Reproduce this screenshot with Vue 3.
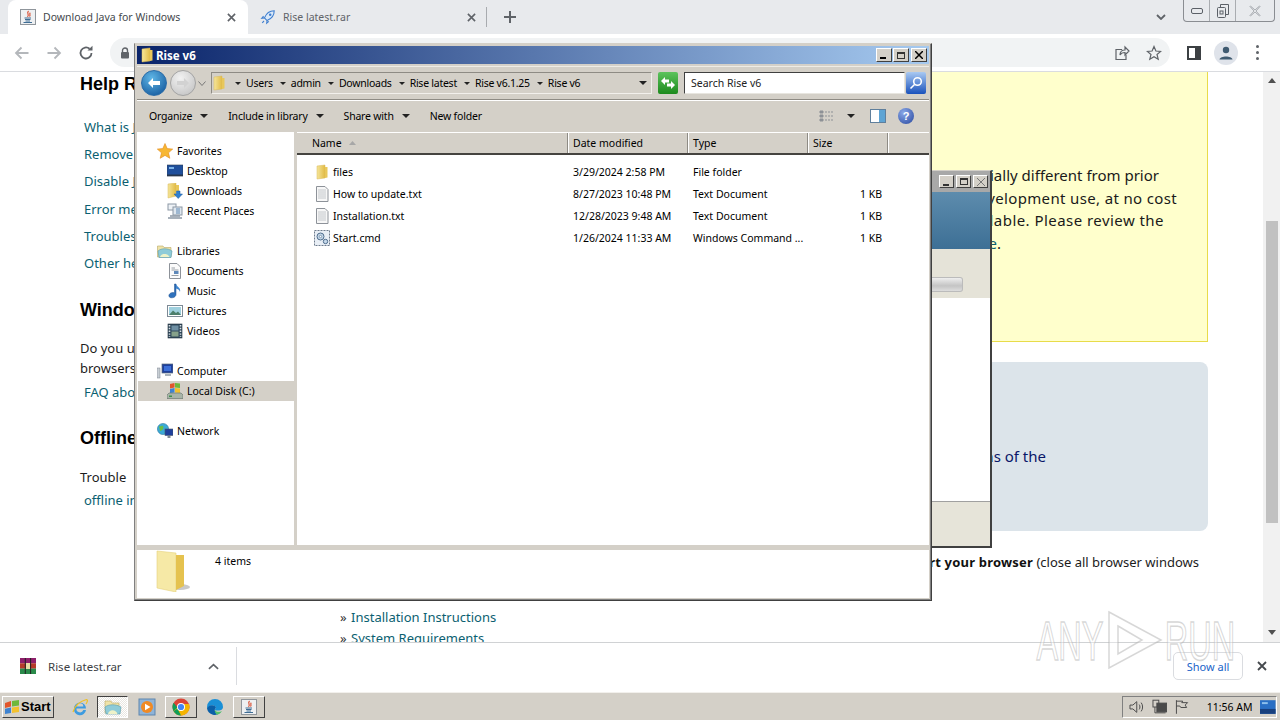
<script setup>
const crumbs = ['Users', 'admin', 'Downloads', 'Rise latest', 'Rise v6.1.25', 'Rise v6']
const navRows = [
  { label: 'Favorites', icon: 'i-star', level: 0 },
  { label: 'Desktop', icon: 'i-desktop', level: 1 },
  { label: 'Downloads', icon: 'i-downloads', level: 1 },
  { label: 'Recent Places', icon: 'i-recent', level: 1 },
  { gap: true },
  { label: 'Libraries', icon: 'i-libraries', level: 0 },
  { label: 'Documents', icon: 'i-doc', level: 1 },
  { label: 'Music', icon: 'i-music', level: 1 },
  { label: 'Pictures', icon: 'i-pictures', level: 1 },
  { label: 'Videos', icon: 'i-videos', level: 1 },
  { gap: true },
  { label: 'Computer', icon: 'i-computer', level: 0 },
  { label: 'Local Disk (C:)', icon: 'i-disk', level: 1, selected: true },
  { gap: true },
  { label: 'Network', icon: 'i-network', level: 0 }
]
const files = [
  { name: 'files', icon: 'i-folder', date: '3/29/2024 2:58 PM', type: 'File folder', size: '' },
  { name: 'How to update.txt', icon: 'i-txt', date: '8/27/2023 10:48 PM', type: 'Text Document', size: '1 KB' },
  { name: 'Installation.txt', icon: 'i-txt', date: '12/28/2023 9:48 AM', type: 'Text Document', size: '1 KB' },
  { name: 'Start.cmd', icon: 'i-cmd', date: '1/26/2024 11:33 AM', type: 'Windows Command ...', size: '1 KB' }
]
const yellowLines = [
  { text: 'ially different from prior', inset: 48, spacing: 0 },
  { text: 'development use, at no cost', inset: 30, spacing: 0.35 },
  { text: 'available. Please review the', inset: 43, spacing: 0.45 }
]
</script>

<template>
  <div class="screen">
    <svg class="defs" width="0" height="0">
      <defs>
        <linearGradient id="gFolder" x1="0" y1="0" x2="1" y2="0">
          <stop offset="0" stop-color="#f5e59a" />
          <stop offset="1" stop-color="#e2bb45" />
        </linearGradient>
        <symbol id="i-folder" viewBox="0 0 16 16">
          <path d="M3 2 L11 1 L11 14 L3 15 Z" fill="url(#gFolder)" stroke="#d9b95a" stroke-width=".5" />
          <path d="M11 3 H13.5 V13.5 L11 14 Z" fill="#e8c75a" />
        </symbol>
        <symbol id="i-txt" viewBox="0 0 16 16">
          <path d="M2.5 .5 H11 L14 3.5 V15.5 H2.5 Z" fill="#f7f7f7" stroke="#8d9299" />
          <path d="M4 4 H12 M4 6 H12 M4 8 H12 M4 10 H12 M4 12 H12" stroke="#c4c8cc" />
        </symbol>
        <symbol id="i-cmd" viewBox="0 0 16 16">
          <rect x=".5" y=".5" width="15" height="15" fill="#e8eef5" stroke="#6d7b8c" stroke-dasharray="2 1" />
          <circle cx="6.5" cy="6.5" r="3.5" fill="#c5d8ea" stroke="#4f6d8c" />
          <circle cx="6.5" cy="6.5" r="1.2" fill="#fff" stroke="#4f6d8c" stroke-width=".6" />
          <circle cx="11.5" cy="11.5" r="2.2" fill="#c5d8ea" stroke="#4f6d8c" />
        </symbol>
        <symbol id="i-star" viewBox="0 0 16 16">
          <path d="M8 .5 L10.2 5.6 L15.7 6.1 L11.5 9.8 L12.8 15.3 L8 12.4 L3.2 15.3 L4.5 9.8 L.3 6.1 L5.8 5.6 Z" fill="#f7b733" stroke="#e28a1e" stroke-width=".6" />
        </symbol>
        <symbol id="i-desktop" viewBox="0 0 16 16">
          <rect x="0" y="2" width="16" height="11" fill="#1f4f9c" stroke="#2c3e55" stroke-width=".6" />
          <rect x="2" y="4" width="5" height="2" fill="#7db4e8" />
          <rect x="0" y="11.5" width="16" height="1.6" fill="#27374c" />
        </symbol>
        <symbol id="i-downloads" viewBox="0 0 16 16">
          <path d="M1 1 L9 0 L9 13 L1 15 Z" fill="url(#gFolder)" stroke="#d9b95a" stroke-width=".5" />
          <path d="M9 2 H12 V8 H9 Z" fill="#e8c75a" />
          <path d="M9.5 8 H13 V11 H15.5 L11.2 15.5 L7 11 H9.5 Z" fill="#2f7fd0" stroke="#1c5a9e" stroke-width=".5" />
        </symbol>
        <symbol id="i-recent" viewBox="0 0 16 16">
          <rect x="1" y="1" width="8" height="6" fill="#eef2f6" stroke="#8c98a5" />
          <rect x="6" y="4" width="9" height="8" fill="#dfe7ef" stroke="#8c98a5" />
          <path d="M1 15 H15 M3 13 H13" stroke="#8c98a5" stroke-width="1.4" />
          <path d="M9 6 H13 M9 8 H13 M9 10 H13" stroke="#5c87b2" />
        </symbol>
        <symbol id="i-libraries" viewBox="0 0 16 16">
          <path d="M.5 3 H6 L7 4.5 H14 V14 H.5 Z" fill="#efe3a8" stroke="#b9a765" stroke-width=".6" />
          <path d="M1 8 C4 5 11 5 15 8 L14 14.5 H2 Z" fill="#8ecbd8" stroke="#5b9aa9" stroke-width=".6" />
          <path d="M3 14 C4 10 11 10 12.5 14 Z" fill="#eef2c8" />
        </symbol>
        <symbol id="i-doc" viewBox="0 0 16 16">
          <path d="M2.5 .5 H10 L13.5 4 V15.5 H2.5 Z" fill="#fbfbfb" stroke="#8d9299" />
          <path d="M4.5 5 H8 M4.5 7 H11.5 M4.5 12.5 H11.5" stroke="#9aa0a6" />
          <rect x="7" y="8" width="4.5" height="3" fill="#5e88b8" />
        </symbol>
        <symbol id="i-music" viewBox="0 0 16 16">
          <path d="M9 1 V11.5 C9 14 5.5 15.5 3 14.5 C0.5 13 2.5 9.5 6 9.5 L7.5 9.8 V1 Z" fill="#2f72bd" stroke="#1c4f8c" stroke-width=".5" />
          <path d="M9 1 C10 4 14 4.5 13 9 C12.5 6.5 10.5 6 9 5.5 Z" fill="#3f86cf" />
        </symbol>
        <symbol id="i-pictures" viewBox="0 0 16 16">
          <rect x=".5" y="2.5" width="15" height="11" fill="#fff" stroke="#7d8a95" />
          <rect x="2" y="4" width="12" height="8" fill="#9fd0de" />
          <path d="M2 12 L6 7.5 L9 10 L11 8.5 L14 12 Z" fill="#4d7f6c" />
        </symbol>
        <symbol id="i-videos" viewBox="0 0 16 16">
          <rect x="1" y="1" width="14" height="14" fill="#30495c" stroke="#22313d" stroke-width=".6" />
          <path d="M2.5 2 V14 M13.5 2 V14" stroke="#d6dde2" stroke-width="1.6" stroke-dasharray="1.4 1.4" />
          <rect x="4.5" y="2.5" width="7" height="5" fill="#6e8fa3" />
          <rect x="4.5" y="8.5" width="7" height="5" fill="#86a18a" />
        </symbol>
        <symbol id="i-computer" viewBox="0 0 16 16">
          <rect x="5" y="1" width="11" height="9" fill="#1e3f9c" stroke="#5b6a7c" stroke-width=".7" />
          <rect x="7" y="3" width="7" height="5" fill="#3c6fd8" />
          <rect x="8" y="11" width="6" height="2" fill="#aab3bb" />
          <rect x="0" y="5" width="3" height="10" fill="#c8ced4" stroke="#77818b" stroke-width=".5" />
        </symbol>
        <symbol id="i-disk" viewBox="0 0 16 16">
          <path d="M3 1 L7.5 0 V4.5 L3 5.5 Z" fill="#e2562b" />
          <path d="M8 0 L13 .5 V5 L8 4.5 Z" fill="#6fb83a" />
          <path d="M3 6 L7.5 5 V9.5 L3 10 Z" fill="#3f83d0" />
          <path d="M8 5 L13 5.5 V10 L8 9.5 Z" fill="#f3c12d" />
          <path d="M0 12 L2 10 H14 L16 12 V15.5 H0 Z" fill="#a8b4a8" stroke="#5d6b64" stroke-width=".6" />
          <rect x="2" y="12.5" width="3" height="1.5" fill="#3e8f4d" />
        </symbol>
        <symbol id="i-network" viewBox="0 0 16 16">
          <circle cx="6" cy="6" r="5.6" fill="#3ba9d6" stroke="#1f6c95" stroke-width=".5" />
          <path d="M2 3 C4 4 5 2 6 3 S6 8 3 8 Z" fill="#6bbe45" />
          <rect x="8" y="6" width="8" height="6.5" fill="#1e3f9c" stroke="#46566a" stroke-width=".6" />
          <rect x="10.5" y="13" width="3" height="2" fill="#808b95" />
        </symbol>
        <symbol id="i-java" viewBox="0 0 16 16">
          <rect x=".5" y=".5" width="15" height="15" fill="#eef0f2" stroke="#8f959b" />
          <path d="M8.5 2 C6 4.5 10 5.5 7.5 7.8 M10.3 3.8 C8.8 5 11 6 9.5 7.5" stroke="#d8482b" stroke-width="1.1" fill="none" />
          <path d="M4.5 9 H11 M5 10.5 H10.5 M5.5 12 H10 M3.5 13.5 H12" stroke="#3f6d94" stroke-width="1" />
        </symbol>
      </defs>
    </svg>

    <!-- Chrome tab strip -->
    <header class="tabstrip">
      <div class="tab active">
        <svg class="ico16"><use href="#i-java" /></svg>
        <span class="tab-title">Download Java for Windows</span>
        <svg class="tab-x" viewBox="0 0 10 10"><path d="M1 1 L9 9 M9 1 L1 9" /></svg>
      </div>
      <div class="tab">
        <svg class="ico16" viewBox="0 0 18 18">
          <path d="M16 2 C11 2 7 5 5 10 L8 13 C13 11 16 7 16 2 Z" fill="#dbe9f8" stroke="#3f7fd0" stroke-width="1.2" />
          <path d="M5 10 L2 10.5 L4 8 M8 13 L7.5 16 L10 14 M4.5 13.5 L2.5 15.5" fill="none" stroke="#3f7fd0" stroke-width="1.2" />
          <circle cx="11.5" cy="6.5" r="1.4" fill="#3f7fd0" />
        </svg>
        <span class="tab-title">Rise latest.rar</span>
        <svg class="tab-x" viewBox="0 0 10 10"><path d="M1 1 L9 9 M9 1 L1 9" /></svg>
      </div>
      <span class="tab-sep"></span>
      <svg class="tab-plus" viewBox="0 0 12 12"><path d="M6 0 V12 M0 6 H12" /></svg>
      <span class="spacer"></span>
      <svg class="tab-chevron" viewBox="0 0 10 6"><path d="M1 1 L5 5 L9 1" /></svg>
      <div class="win-ctrls">
        <span class="wc wc-min"><svg viewBox="0 0 12 6" width="12" height="6"><rect x=".5" y=".5" width="11" height="5" rx="1.5" /></svg></span>
        <span class="wc wc-res"><svg viewBox="0 0 12 14" width="12" height="14"><rect x=".5" y="3.5" width="8" height="10" rx="1" /><path d="M3.5 3 V.5 H11.5 V10.5 H9" /><rect x="3" y="7" width="3" height="3" /></svg></span>
        <span class="wc wc-close"><svg viewBox="0 0 12 12" width="12" height="12"><path d="M1.5 1 L6 5 L10.5 1 L11 1.5 L7 6 L11 10.5 L10.5 11 L6 7 L1.5 11 L1 10.5 L5 6 L1 1.5 Z" /></svg></span>
      </div>
    </header>

    <!-- Chrome toolbar -->
    <nav class="toolbar">
      <svg class="tb-ic dim" viewBox="0 0 16 16"><path d="M14.5 8 H2 M7.5 2.5 L2 8 L7.5 13.5" /></svg>
      <svg class="tb-ic dim" viewBox="0 0 16 16"><path d="M1.5 8 H14 M8.5 2.5 L14 8 L8.5 13.5" /></svg>
      <svg class="tb-ic" viewBox="0 0 16 16"><path d="M13.5 8 A5.5 5.5 0 1 1 11.6 3.8" /><path class="solid" d="M9.5 5.5 H14.5 V.8 Z" /></svg>
      <div class="omnibox">
        <svg class="lock" viewBox="0 0 10 12"><path d="M2.5 5 V3.5 A2.5 2.5 0 0 1 7.5 3.5 V5" /><rect class="solid" x="1" y="5" width="8" height="6.5" rx="1" /></svg>
        <span class="spacer"></span>
        <svg class="omni-ic" viewBox="0 0 16 16"><path d="M8 4.5 H2 V14.5 H12 V10" /><path d="M6 10 C6 6.5 8.5 5 11 5 V2 L15 6 L11 10 V7.5 C9 7.5 7 8 6 10 Z" /></svg>
        <svg class="omni-ic" viewBox="0 0 16 16"><path d="M8 1.5 L9.9 6 L14.7 6.4 L11 9.5 L12.2 14.2 L8 11.7 L3.8 14.2 L5 9.5 L1.3 6.4 L6.1 6 Z" /></svg>
      </div>
      <svg class="panel-ic" viewBox="0 0 14 14"><rect x="1" y="1" width="12" height="12" /><rect class="solid" x="8" y="1" width="5" height="12" /></svg>
      <span class="avatar"><svg viewBox="0 0 16 16" width="16" height="16"><circle cx="8" cy="5" r="3.2" /><path d="M1.5 14.5 C2 10.5 14 10.5 14.5 14.5 Z" /></svg></span>
      <span class="dots"><i></i><i></i><i></i></span>
    </nav>

    <!-- Web page -->
    <main class="page">
      <aside class="page-left">
        <h2 class="h-first">Help Resources</h2>
        <ul class="links">
          <li>What is Java?</li>
          <li>Remove older versions</li>
          <li>Disable Java</li>
          <li>Error messages</li>
          <li>Troubleshoot Java</li>
          <li>Other help</li>
        </ul>
        <h2 class="h-win">Windows</h2>
        <p class="para">Do you use<br />browsers</p>
        <p class="link-line link-faq">FAQ about</p>
        <h2 class="h-off">Offline</h2>
        <p class="para para-off">Trouble</p>
        <p class="link-line link-off">offline installer</p>
      </aside>
      <section class="page-main">
        <div class="notice">
          <div
            v-for="l in yellowLines"
            :key="l.text"
            class="notice-line"
            :style="{ paddingRight: l.inset + 'px', letterSpacing: l.spacing + 'px' }"
          >{{ l.text }}</div>
          <div class="notice-line last">here<span class="dot">.</span></div>
        </div>
        <div class="bluebox"><span class="blue-text">versions of the</span></div>
        <p class="restart"><b>Restart your browser</b> (close all browser windows</p>
        <p class="more"><span class="raquo">»</span> <span class="teal">Installation Instructions</span></p>
        <p class="more"><span class="raquo">»</span> <span class="teal">System Requirements</span></p>
      </section>
      <div class="scrollbar">
        <span class="sb-arrow up"></span>
        <span class="sb-thumb"></span>
        <span class="sb-arrow down"></span>
      </div>
    </main>

    <!-- Download shelf -->
    <footer class="shelf">
      <svg class="rar" viewBox="0 0 16 16">
        <rect x="0" y="0" width="16" height="5.4" fill="#8e1f6b" />
        <rect x="0" y="5.3" width="16" height="5.4" fill="#b63a2a" />
        <rect x="0" y="10.6" width="16" height="5.4" fill="#2a8a4a" />
        <path d="M5.3 0 V16 M10.6 0 V16" stroke="#222" stroke-width="1" />
        <rect x="6" y="5" width="4" height="6" fill="#e9dca5" />
      </svg>
      <span class="shelf-name">Rise latest.rar</span>
      <svg class="shelf-chev" viewBox="0 0 12 7"><path d="M1 6 L6 1.5 L11 6" /></svg>
      <span class="shelf-sep"></span>
      <span class="spacer"></span>
      <span class="show-all">Show all</span>
      <svg class="shelf-x" viewBox="0 0 10 10"><path d="M1 1 L9 9 M9 1 L1 9" /></svg>
    </footer>

    <!-- Windows taskbar -->
    <footer class="taskbar">
      <button class="start">
        <svg viewBox="0 0 16 16" width="16" height="16">
          <path d="M1 4 L7 2 V7.5 L1 9 Z" fill="#e2562b" />
          <path d="M8 2 L15 1 V6.5 L8 7.5 Z" fill="#6fb83a" />
          <path d="M1 9.8 L7 8.5 V14 L1 15 Z" fill="#3f83d0" />
          <path d="M8 8.5 L15 7.5 V13 L8 14 Z" fill="#f3c12d" />
        </svg>
        <span>Start</span>
      </button>
      <span class="tk-slot ie">
        <svg viewBox="0 0 18 18" width="18" height="18">
          <path d="M3 10.5 A6 6 0 1 1 15 10.5 H5.5 A3.5 3.5 0 0 0 12.3 12 H15 A6 6 0 0 1 3 10.5 Z M5.7 8.5 H12.3 A3.3 3.3 0 0 0 5.7 8.5 Z" fill="#3d9be0" fill-rule="evenodd" />
          <path d="M2 14 C4 7 10 3 15.5 1.5 C17 1.5 16.5 4 15 6" fill="none" stroke="#f0c020" stroke-width="1.2" />
        </svg>
      </span>
      <span class="tk-btn pressed">
        <svg viewBox="0 0 18 18" width="18" height="18">
          <path d="M1 3 H7 L8 5 H15 V15 H1 Z" fill="#efe3a8" stroke="#b9a765" stroke-width=".6" />
          <path d="M1 9 C5 6 12 6 17 9 L16 16 H2 Z" fill="#8ecbd8" stroke="#5b9aa9" stroke-width=".6" />
          <path d="M4 16 C5 11 12 11 13.5 16 Z" fill="#eef2c8" />
        </svg>
      </span>
      <span class="tk-slot wmp">
        <svg viewBox="0 0 18 18" width="18" height="18">
          <rect x="1" y="1" width="16" height="16" fill="#8fb4d8" stroke="#5f86ad" />
          <circle cx="9" cy="9" r="6" fill="#f08a24" />
          <path d="M7 5.8 L12.5 9 L7 12.2 Z" fill="#fff" />
        </svg>
      </span>
      <span class="tk-btn">
        <svg viewBox="0 0 18 18" width="18" height="18">
          <circle cx="9" cy="9" r="8.5" fill="#db4437" />
          <path d="M9 9 L1.6 13.2 A8.5 8.5 0 0 1 1.6 4.8 L5 9 Z" fill="#0f9d58" />
          <path d="M1.6 13.3 A8.5 8.5 0 0 0 9 17.5 A8.5 8.5 0 0 0 17 6 H9 Z" fill="#f4b400" />
          <path d="M1.6 13.3 L5.5 10.5 L9 17.5 A8.5 8.5 0 0 1 1.6 13.3 Z" fill="#0f9d58" />
          <circle cx="9" cy="9" r="4" fill="#fff" />
          <circle cx="9" cy="9" r="3.1" fill="#4285f4" />
        </svg>
      </span>
      <span class="tk-slot edge">
        <svg viewBox="0 0 18 18" width="18" height="18">
          <path d="M1 9 A8 8 0 0 1 17 9 C17 12 14 12.5 11 12.5 C8 12.5 9 10.5 10 9.5 C8 6.5 3 7 1 11 Z" fill="#1a8fd6" />
          <path d="M1 10.5 C3 6.5 8.5 6.5 10 9.5 C7.5 12 9 15 12.5 15 L15 14 A8 8 0 0 1 1 10.5 Z" fill="#0b5fa8" />
          <path d="M9 12 C10 14 13 14.5 16 13 A8 8 0 0 1 11.5 16.8 C9.5 16 8.5 14 9 12 Z" fill="#52c36a" />
        </svg>
      </span>
      <span class="tk-btn"><svg class="ico16"><use href="#i-java" /></svg></span>
      <span class="spacer"></span>
      <div class="tray">
        <svg class="tray-ic" viewBox="0 0 16 16"><path d="M1 6 H4 L8 2.5 V13.5 L4 10 H1 Z" /><path d="M10.5 5.5 C11.5 7 11.5 9 10.5 10.5 M12.5 3.5 C14.5 6 14.5 10 12.5 12.5" /></svg>
        <svg class="tray-ic" viewBox="0 0 16 16"><rect x="1" y="1" width="6" height="7" /><rect class="dark" x="5" y="4" width="10" height="9" /><path d="M3 8 V14 H14" /></svg>
        <svg class="tray-ic" viewBox="0 0 16 16"><path d="M2.5 1 V15 M2.5 2 H9 L8 3.5 H14 L11.5 6 L13 8.5 H7 L6 7 H2.5" /></svg>
        <span class="clock">11:56 AM</span>
        <svg class="tray-desk" viewBox="0 0 16 14"><rect width="16" height="14" fill="#2a6fc4" /><rect y="9" width="16" height="5" fill="#18407e" /><rect x="2" y="2" width="6" height="2" fill="#8ec0ec" /></svg>
      </div>
    </footer>

    <!-- Window partly hidden behind Explorer -->
    <div class="back-win">
      <div class="back-title">
        <span class="back-btn"><i class="min-bar"></i></span>
        <span class="back-btn"><i class="max-box"></i></span>
        <span class="back-btn"><svg viewBox="0 0 8 8" width="8" height="8"><path d="M0 0 L8 8 M8 0 L0 8" /></svg></span>
      </div>
      <div class="back-banner"></div>
      <div class="back-bar"><span class="back-progress"></span></div>
      <div class="back-body"></div>
      <div class="back-foot"></div>
    </div>

    <!-- Explorer window -->
    <div class="explorer">
      <div class="titlebar">
        <svg class="ico16"><use href="#i-folder" /></svg>
        <span class="title-text">Rise v6</span>
        <span class="spacer"></span>
        <span class="cap-btn"><i class="min-bar"></i></span>
        <span class="cap-btn"><i class="max-box"></i></span>
        <span class="cap-btn close"><svg viewBox="0 0 8 8" width="8" height="8"><path d="M0 0 L8 8 M8 0 L0 8" /></svg></span>
      </div>

      <div class="addr-row">
        <span class="round back"><svg viewBox="0 0 14 12" width="14" height="12"><path d="M1 6 L6 1 V4 H13 V8 H6 V11 Z" /></svg></span>
        <span class="round fwd"><svg viewBox="0 0 14 12" width="14" height="12"><path d="M13 6 L8 1 V4 H1 V8 H8 V11 Z" /></svg></span>
        <svg class="hist" viewBox="0 0 8 5"><path d="M.5 .5 L4 4.5 L7.5 .5" /></svg>
        <div class="breadcrumb">
          <svg class="ico16 crumb-ico"><use href="#i-folder" /></svg>
          <template v-for="c in crumbs" :key="c">
            <span class="tri"></span>
            <span class="crumb">{{ c }}</span>
          </template>
          <span class="spacer"></span>
          <span class="tri big"></span>
        </div>
        <span class="refresh"><svg viewBox="0 0 16 14" width="16" height="14"><path d="M1 5 L5 1 V3.5 H9 V6.5 H5 V9 Z M15 9 L11 13 V10.5 H7 V7.5 H11 V5 Z" /></svg></span>
        <div class="searchbox">Search Rise v6</div>
        <span class="searchbtn"><svg viewBox="0 0 14 14" width="14" height="14"><circle cx="8.5" cy="5.5" r="3.8" /><path d="M5.5 8.5 L1.5 12.5" /></svg></span>
      </div>

      <div class="cmd-row">
        <span class="cmd">Organize<span class="tri"></span></span>
        <span class="cmd">Include in library<span class="tri"></span></span>
        <span class="cmd">Share with<span class="tri"></span></span>
        <span class="cmd plain">New folder</span>
        <span class="spacer"></span>
        <svg class="views" viewBox="0 0 16 12"><path d="M1 1 H4 V3 H1 Z M1 5 H4 V7 H1 Z M1 9 H4 V11 H1 Z" /><path d="M6 2 H15 M6 6 H15 M6 10 H15" stroke-dasharray="2 1" /></svg>
        <span class="tri views-tri"></span>
        <svg class="preview" viewBox="0 0 16 14"><rect x=".5" y=".5" width="15" height="13" fill="#fff" stroke="#5f7f9c" /><rect x="9" y="1" width="6" height="12" fill="#5ea4d4" /></svg>
        <span class="help">?</span>
      </div>

      <div class="panes">
        <div class="nav-pane">
          <template v-for="(r, i) in navRows" :key="i">
            <div v-if="r.gap" class="nav-gap"></div>
            <div v-else class="nav-row" :class="['lvl' + r.level, { selected: r.selected }]">
              <svg class="ico16"><use :href="'#' + r.icon" /></svg>
              <span>{{ r.label }}</span>
            </div>
          </template>
        </div>
        <div class="content-pane">
          <div class="col-heads">
            <span class="col c-name">Name<svg class="sort" viewBox="0 0 7 4"><path d="M0 4 L3.5 0 L7 4 Z" /></svg></span>
            <span class="col c-date">Date modified</span>
            <span class="col c-type">Type</span>
            <span class="col c-size">Size</span>
            <span class="col c-rest"></span>
          </div>
          <div class="file-list">
            <div v-for="f in files" :key="f.name" class="file-row">
              <span class="f-name"><svg class="ico16"><use :href="'#' + f.icon" /></svg>{{ f.name }}</span>
              <span class="f-date">{{ f.date }}</span>
              <span class="f-type">{{ f.type }}</span>
              <span class="f-size">{{ f.size }}</span>
            </div>
          </div>
        </div>
      </div>

      <div class="status">
        <svg class="status-ico" viewBox="0 0 34 42">
          <ellipse cx="24" cy="37" rx="10" ry="3" fill="#c9c9c9" />
          <path d="M1 1 L20 3 V42 L1 38 Z" fill="#f6e9a6" stroke="#e6d27c" stroke-width=".6" />
          <path d="M20 5 H28 V36 L20 40 Z" fill="#e5c24f" />
        </svg>
        <span class="status-text">4 items</span>
      </div>
    </div>

    <!-- Watermark -->
    <div class="watermark">
      <span>ANY</span>
      <svg viewBox="0 0 58 60" width="58" height="60">
        <path d="M3 2 L55 30 L3 58 Z M12 16 L36 30 L12 44 Z" fill-rule="evenodd" />
      </svg>
      <span>RUN</span>
    </div>
  </div>
</template>

<style scoped>
.screen {
  position: relative;
  width: 1280px;
  height: 720px;
  overflow: hidden;
  display: flex;
  flex-direction: column;
  background: #fff;
  font-family: "Noto Sans", "Liberation Sans", sans-serif;
  font-size: 10.5px;
  color: #1a1a1a;
}
.defs { position: absolute; }
.spacer { flex: 1; }
.ico16 { width: 16px; height: 16px; flex: none; }

/* tab strip */
.tabstrip {
  height: 34px;
  flex: none;
  background: #e8eaed;
  display: flex;
  align-items: center;
  padding-left: 8px;
}
.tab {
  width: 240px;
  height: 34px;
  display: flex;
  align-items: center;
  padding: 0 10px 0 12px;
  box-sizing: border-box;
  gap: 7px;
  color: #5f6368;
}
.tab.active { background: #fff; border-radius: 8px 8px 0 0; color: #45494d; }
.tab-title { flex: 1; font-size: 10.5px; white-space: nowrap; }
.tab-x { width: 9px; height: 9px; stroke: #5f6368; stroke-width: 1.8; fill: none; margin-right: 2px; }
.tab-sep { width: 1px; height: 20px; background: #a8abaf; margin-left: -2px; }
.tab-plus { width: 12px; height: 12px; stroke: #5f6368; stroke-width: 2; margin-left: 17px; }
.tab-chevron { width: 10px; height: 6px; stroke: #5f6368; stroke-width: 1.8; fill: none; margin-right: 17px; }
.win-ctrls {
  display: flex;
  align-self: flex-start;
  height: 22px;
  width: 92px;
  margin-right: 5px;
  box-sizing: border-box;
  border: 1px solid #8a8d92;
  border-top: 0;
  border-radius: 0 0 4px 4px;
}
.wc { display: flex; align-items: center; justify-content: center; width: 25px; border-right: 1px solid #a9acb0; fill: none; stroke: #5b6067; }
.wc-close { flex: 1; border-right: 0; }
.wc-close svg { fill: #e8eaed; stroke: #80858b; stroke-width: .6; }

/* toolbar */
.toolbar {
  height: 38px;
  flex: none;
  box-sizing: border-box;
  display: flex;
  align-items: center;
  padding: 0 0 0 14px;
  border-bottom: 1px solid #dadce0;
}
.tb-ic { width: 16px; height: 16px; margin-right: 16px; fill: none; stroke: #5f6368; stroke-width: 1.8; }
.tb-ic.dim { stroke: #b4b7bb; }
.tb-ic .solid { fill: #5f6368; stroke: none; }
.omnibox {
  flex: none;
  width: 1060px;
  height: 29px;
  margin-right: 17px;
  border-radius: 15px;
  background: #f1f3f4;
  display: flex;
  align-items: center;
  padding: 0 8px 0 10px;
  box-sizing: border-box;
  gap: 16px;
}
.lock { width: 10px; height: 12px; fill: none; stroke: #5f6368; stroke-width: 1.4; }
.lock .solid { fill: #5f6368; stroke: none; }
.omni-ic { width: 16px; height: 16px; fill: none; stroke: #5f6368; stroke-width: 1.2; }
.panel-ic { width: 14px; height: 14px; fill: #fff; stroke: #3c4043; stroke-width: 2; }
.panel-ic .solid { fill: #3c4043; stroke: none; }
.avatar {
  width: 24px;
  height: 24px;
  margin-left: 13px;
  border-radius: 50%;
  background: #dfe3ea;
  display: flex;
  align-items: center;
  justify-content: center;
  fill: #3f5a70;
}
.dots { display: flex; flex-direction: column; gap: 3px; margin-left: 18px; }
.dots i { width: 3px; height: 3px; border-radius: 50%; background: #5f6368; }

/* page */
.page {
  flex: 1;
  min-height: 0;
  display: flex;
  overflow: hidden;
  font-size: 13px;
  color: #1c1c1c;
}
.page-left { width: 340px; flex: none; padding-left: 80px; box-sizing: border-box; white-space: nowrap; }
.page-left h2 { margin: 0; font-size: 18px; line-height: 24px; font-weight: 700; font-family: "Liberation Sans", sans-serif; color: #000; }
.h-first { padding-top: 0; }
.links { list-style: none; margin: 18px 0 0; padding: 0 0 0 4px; color: #0b5f71; }
.links li { line-height: 27.2px; }
.h-win { margin-top: 21px !important; }
.para { margin: 16px 0 0; line-height: 20px; }
.link-line { margin: 0; padding-left: 4px; line-height: 23px; color: #0b5f71; }
.link-faq { margin-top: 3px; }
.h-off { margin-top: 22px !important; }
.para-off { margin-top: 17px; }
.link-off { margin-top: 2px; }
.page-main { width: 868px; flex: none; white-space: nowrap; }
.notice {
  height: 270px;
  box-sizing: border-box;
  background: #ffffcc;
  border: 1px solid #e8dc4a;
  border-top: 0;
  padding-top: 92px;
  font-size: 15px;
  line-height: 22.5px;
  color: #1a1a1a;
}
.notice-line { text-align: right; }
.notice-line.last { padding-right: 206px; color: #0b5f71; }
.notice-line .dot { color: #1a1a1a; }
.bluebox {
  height: 169px;
  margin-top: 20px;
  box-sizing: border-box;
  background: #dce4ea;
  border-radius: 8px;
  padding-top: 84px;
  padding-right: 162px;
  text-align: right;
  font-size: 15px;
  line-height: 20px;
}
.blue-text { color: #0a1668; }
.restart { margin: 21px 0 0; padding-right: 9px; text-align: right; font-size: 13px; line-height: 20px; }
.restart b { color: #111; letter-spacing: .2px; }
.more { margin: 0; line-height: 21px; font-size: 13px; }
.restart + .more { margin-top: 35px; }
.raquo { color: #333; margin-right: 1px; }
.teal { color: #0b5f71; }
.scrollbar {
  width: 17px;
  margin-left: 55px;
  flex: none;
  background: #f1f1f1;
  display: flex;
  flex-direction: column;
  align-items: center;
}
.sb-arrow { width: 0; height: 0; border-left: 4px solid transparent; border-right: 4px solid transparent; }
.sb-arrow.up { border-bottom: 5px solid #505050; margin-top: 6px; }
.sb-arrow.down { border-top: 5px solid #505050; margin-top: auto; margin-bottom: 7px; }
.sb-thumb { width: 12px; height: 302px; background: #c1c1c1; margin-top: 138px; }

/* shelf */
.shelf {
  height: 50px;
  flex: none;
  box-sizing: border-box;
  border-top: 1px solid #d0d2d4;
  display: flex;
  align-items: center;
  padding: 0 0 3px 20px;
  font-size: 11.5px;
  color: #3c4043;
}
.rar { width: 16px; height: 16px; flex: none; }
.shelf-name { margin-left: 12px; width: 160px; white-space: nowrap; }
.shelf-chev { width: 11px; height: 7px; fill: none; stroke: #5f6368; stroke-width: 1.8; margin-left: 0; }
.shelf-sep { width: 1px; height: 38px; background: #dadce0; margin-left: 17px; }
.show-all {
  width: 70px;
  height: 28px;
  box-sizing: border-box;
  border: 1px solid #dadce0;
  border-radius: 5px;
  display: flex;
  align-items: center;
  justify-content: center;
  font-size: 11px;
  color: #1a64c8;
}
.shelf-x { width: 10px; height: 10px; stroke: #45494d; stroke-width: 1.8; margin: 0 13px 0 14px; }

/* taskbar */
.taskbar {
  height: 28px;
  flex: none;
  box-sizing: border-box;
  background: #d4d0c8;
  border-top: 1px solid #f2f0ec;
  display: flex;
  align-items: center;
  padding: 0 3px 0 2px;
  color: #000;
}
.start {
  width: 52px;
  height: 22px;
  box-sizing: border-box;
  padding: 0 0 0 1px;
  display: flex;
  align-items: center;
  gap: 1px;
  background: #d4d0c8;
  border: 1px solid;
  border-color: #fff #404040 #404040 #fff;
  font: 700 13px "Liberation Sans", sans-serif;
  color: #000;
}
.tk-slot { width: 32px; display: flex; justify-content: center; }
.tk-slot.ie { margin-left: 10px; margin-right: 1px; }
.tk-slot.wmp { margin: 0 2px 0 3px; }
.tk-slot.edge { margin: 0 2px; }
.tk-btn {
  width: 32px;
  height: 22px;
  box-sizing: border-box;
  display: flex;
  align-items: center;
  justify-content: center;
  border: 1px solid;
  border-color: #fff #404040 #404040 #fff;
}
.tk-btn.pressed {
  width: 31px;
  background: repeating-conic-gradient(#fff 0 25%, #e8e6e0 0 50%) 0 0 / 2px 2px;
  border-color: #404040 #fff #fff #404040;
}
.tray {
  width: 155px;
  height: 22px;
  box-sizing: border-box;
  border: 1px solid;
  border-color: #808080 #fff #fff #808080;
  display: flex;
  align-items: center;
  padding-left: 6px;
}
.tray-ic { width: 16px; height: 16px; fill: none; stroke: #4a4a4a; margin-right: 7px; }
.tray-ic .dark { fill: #4a4a4a; }
.clock { margin-left: 10px; white-space: nowrap; }
.tray-desk { width: 16px; height: 14px; margin-left: 8px; }

/* background window */
.back-win {
  position: absolute;
  left: 932px;
  top: 170px;
  width: 60px;
  height: 378px;
  box-sizing: border-box;
  background: #d4d0c8;
  border-right: 2px solid #404040;
  border-bottom: 2px solid #404040;
  border-top: 1px solid #d4d0c8;
  display: flex;
  flex-direction: column;
}
.back-title {
  height: 21px;
  background: #a8a8a8;
  display: flex;
  justify-content: flex-end;
  align-items: center;
  gap: 2px;
  padding-right: 2px;
  flex: none;
}
.back-btn {
  width: 15px;
  height: 13px;
  box-sizing: border-box;
  display: flex;
  align-items: center;
  justify-content: center;
  background: #d4d0c8;
  border: 1px solid;
  border-color: #fff #404040 #404040 #fff;
  stroke: #777;
  stroke-width: 1;
  color: #777;
}
.back-banner { height: 57px; flex: none; background: linear-gradient(#5d8cad, #3d6f95); }
.back-bar { height: 49px; flex: none; background: #e5e3d8; padding-top: 28px; box-sizing: border-box; }
.back-progress { display: block; width: 31px; height: 15px; border-radius: 0 3px 3px 0; background: linear-gradient(#eee, #c4c4c4 60%, #ddd); border: 1px solid #bbb; border-left: 0; box-sizing: border-box; }
.back-body { flex: 1; background: #fff; border-bottom: 1px solid #a0a0a0; }
.back-foot { height: 44px; flex: none; background: #e6e4d9; }

/* explorer */
.explorer {
  position: absolute;
  left: 134px;
  top: 43px;
  width: 798px;
  height: 558px;
  box-sizing: border-box;
  background: #d4d0c8;
  padding: 2px;
  border: 1px solid;
  border-color: #d4d0c8 #404040 #404040 #808080;
  box-shadow: inset -1px -1px 0 #808080;
  display: flex;
  flex-direction: column;
  color: #000;
}
.titlebar {
  height: 18px;
  flex: none;
  background: linear-gradient(90deg, #0a246a, #a6caf0);
  display: flex;
  align-items: center;
  padding: 0 2px;
  gap: 2px;
  color: #fff;
}
.title-text { font: 700 11.5px "Noto Sans", sans-serif; margin-left: -1px; }
.cap-btn {
  width: 16px;
  height: 14px;
  box-sizing: border-box;
  display: flex;
  align-items: center;
  justify-content: center;
  margin-left: -1px;
  background: #d4d0c8;
  border: 1px solid;
  border-color: #fff #404040 #404040 #fff;
  stroke: #000;
  stroke-width: 1.5;
}
.cap-btn.close { margin-left: 0; }
.min-bar { display: block; width: 6px; height: 2px; background: currentColor; color: #000; margin-top: 6px; margin-right: 2px; }
.back-btn .min-bar { color: #333; background: #333; }
.max-box { display: block; width: 8px; height: 7px; box-sizing: border-box; border: 1px solid #333; border-top-width: 2px; }
.addr-row {
  height: 34px;
  flex: none;
  margin-top: 2px;
  box-sizing: border-box;
  display: flex;
  align-items: center;
  border-top: 1px solid #eeece6;
  border-bottom: 1px solid #8e8b84;
  box-shadow: 0 1px 0 #fff;
  padding: 0 0 0 4px;
}
.round { width: 26px; height: 26px; border-radius: 50%; display: flex; align-items: center; justify-content: center; flex: none; box-sizing: border-box; }
.round.back { background: radial-gradient(circle at 40% 30%, #5fb6e6, #0c4e94); fill: #fff; border: 1px solid #2a6ca8; }
.round.fwd { margin-left: 3px; background: radial-gradient(circle at 40% 30%, #f2f2f2, #bdbdbd); fill: #d2d2d2; border: 1px solid #a3a3a3; }
.hist { width: 8px; height: 5px; margin-left: 2px; fill: none; stroke: #777; flex: none; }
.breadcrumb {
  width: 441px;
  height: 22px;
  margin-left: 5px;
  flex: none;
  box-sizing: border-box;
  display: flex;
  align-items: center;
  background: #d4d0c8;
  border: 1px solid;
  border-color: #8e8b84 #f2f0ec #f2f0ec #8e8b84;
  padding-right: 4px;
  white-space: nowrap;
}
.crumb-ico { margin-right: 8px; margin-left: -1px; }
.crumb { margin: 0 7px 0 5px; letter-spacing: -.25px; }
.tri {
  display: inline-block;
  width: 0;
  height: 0;
  border-left: 3px solid transparent;
  border-right: 3px solid transparent;
  border-top: 3px solid #222;
  flex: none;
}
.tri.big, .cmd .tri, .views-tri { border-left-width: 4px; border-right-width: 4px; border-top-width: 4px; }
.refresh {
  width: 20px;
  height: 22px;
  margin-left: 6px;
  border-radius: 2px;
  flex: none;
  background: linear-gradient(#5cc35c, #1d8a1d);
  display: flex;
  align-items: center;
  justify-content: center;
  fill: #fff;
}
.searchbox {
  width: 221px;
  height: 22px;
  margin-left: 6px;
  flex: none;
  box-sizing: border-box;
  background: #fff;
  border: 1px solid;
  border-color: #404040 #e8e6e0 #e8e6e0 #404040;
  padding-left: 6px;
  display: flex;
  align-items: center;
  color: #222;
}
.searchbtn {
  width: 20px;
  height: 22px;
  margin-left: 1px;
  flex: none;
  border-radius: 2px;
  background: linear-gradient(#a9c9f2, #1a52bc);
  display: flex;
  align-items: center;
  justify-content: center;
  fill: none;
  stroke: #fff;
  stroke-width: 1.6;
}
.cmd-row {
  height: 32px;
  flex: none;
  display: flex;
  align-items: center;
  padding: 0 15px 0 12px;
  box-sizing: border-box;
}
.cmd { display: inline-flex; align-items: center; gap: 8px; margin-right: 20px; white-space: nowrap; letter-spacing: -.2px; }
.cmd.plain { margin-right: 0; }
.views { width: 16px; height: 12px; fill: #8d9196; stroke: #8d9196; margin-right: 12px; }
.views-tri { margin-right: 15px; }
.preview { width: 16px; height: 14px; margin-right: 12px; }
.help {
  width: 16px;
  height: 16px;
  border-radius: 50%;
  background: radial-gradient(circle at 35% 30%, #8aa8e8, #27479e);
  color: #fff;
  font: 700 11px "Liberation Sans", sans-serif;
  text-align: center;
  line-height: 16px;
}
.panes { flex: 1; min-height: 0; display: flex; background: #d4d0c8; }
.nav-pane {
  width: 157px;
  flex: none;
  box-sizing: border-box;
  background: #fff;
  padding: 9px 0 0 1px;
}
.nav-row { height: 20px; display: flex; align-items: center; gap: 4px; white-space: nowrap; }
.nav-row.lvl0 { padding-left: 19px; }
.nav-row.lvl1 { padding-left: 29px; }
.nav-row.selected { background: #d4d0c8; }
.nav-gap { height: 20px; }
.content-pane { flex: 1; margin-left: 3px; background: #fff; min-width: 0; display: flex; flex-direction: column; }
.col-heads {
  height: 23px;
  flex: none;
  box-sizing: border-box;
  display: flex;
  background: #d4d0c8;
  border-bottom: 2px solid #45433f;
  border-top: 1px solid #fff;
}
.col { box-sizing: border-box; display: flex; align-items: center; gap: 7px; padding-left: 5px; border-right: 1px solid #8e8b84; box-shadow: 1px 0 0 #fff; }
.c-name { width: 271px; padding-left: 15px; }
.c-date { width: 120px; }
.c-type { width: 120px; }
.c-size { width: 80px; }
.c-rest { flex: 1; border-right: 0; box-shadow: none; }
.sort { width: 7px; height: 4px; fill: #a7a7a7; }
.file-list { padding-top: 6px; }
.file-row { height: 22px; display: grid; grid-template-columns: 271px 120px 120px 74px; align-items: center; white-space: nowrap; }
.f-name { display: flex; align-items: center; gap: 3px; padding-left: 17px; }
.f-date, .f-type { padding-left: 5px; }
.f-size { text-align: right; }
.status {
  height: 48px;
  flex: none;
  margin-top: 5px;
  box-sizing: border-box;
  background: #fff;
  display: flex;
  align-items: flex-start;
  padding-left: 19px;
  gap: 25px;
  line-height: 16px;
}
.status-ico { width: 34px; height: 42px; flex: none; }
.status-text { margin-top: 3px; }

/* watermark */
.watermark {
  position: absolute;
  left: 1037px;
  top: 610px;
  width: 196px;
  height: 60px;
  display: flex;
  align-items: center;
  justify-content: space-between;
  pointer-events: none;
  white-space: nowrap;
  font: 400 56px "Liberation Sans", sans-serif;
  color: rgba(255, 255, 255, .4);
  -webkit-text-stroke: 1.5px rgba(175, 175, 175, .5);
}
.watermark svg { flex: none; fill: rgba(255, 255, 255, .35); stroke: rgba(175, 175, 175, .5); stroke-width: 1.5; }
.watermark span { width: 66px; flex: none; display: flex; justify-content: center; transform: scaleX(.58); }
</style>
